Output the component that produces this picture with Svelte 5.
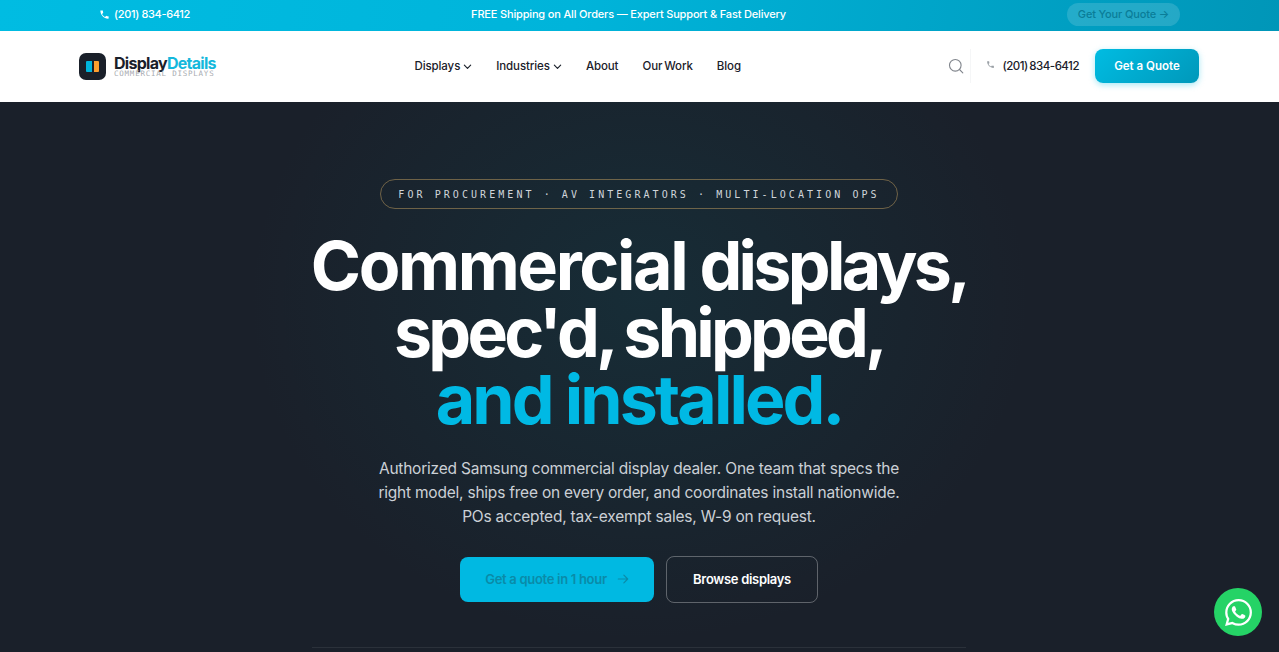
<script>
  const nav = [
    { label: 'Displays', caret: true },
    { label: 'Industries', caret: true },
    { label: 'About', caret: false },
    { label: 'Our Work', caret: false },
    { label: 'Blog', caret: false }
  ];
</script>

<div class="page">
  <div class="topbar">
    <a class="top-phone" href="#top">
      <svg viewBox="0 0 24 24" width="11" height="11"><path d="M6.6 10.8c1.4 2.8 3.8 5.100 6.600 6.600l2.200-2.200c.3-.3.7-.4 1-.2 1.100.4 2.300.6 3.600.6.600 0 1 .4 1 1V20c0 .6-.4 1-1 1C10.600 21 3 13.400 3 4c0-.6.4-1 1-1h3.500c.6 0 1 .4 1 1 0 1.300.2 2.500.6 3.600.1.300 0 .7-.2 1z" fill="#fff"/></svg>
      <span>(201) 834-6412</span>
    </a>
    <p class="top-msg">FREE Shipping on All Orders — Expert Support &amp; Fast Delivery</p>
    <a class="top-pill" href="#top">Get Your Quote →</a>
  </div>

  <header class="header">
    <a class="logo" href="#top">
      <span class="mark"><i class="blue"></i><i class="orange"></i></span>
      <span class="word">
        <span class="name">Display<em>Details</em></span>
        <span class="sub">COMMERCIAL DISPLAYS</span>
      </span>
    </a>
    <nav class="nav">
      {#each nav as item}
        <a href="#top">
          {item.label}
          {#if item.caret}
            <svg viewBox="0 0 10 10" width="9" height="9"><path d="M1.500 3.500 5 7l3.500-3.500" fill="none" stroke="#1a202a" stroke-width="1.300" stroke-linecap="round" stroke-linejoin="round"/></svg>
          {/if}
        </a>
      {/each}
    </nav>
    <div class="actions">
      <svg class="search" viewBox="0 0 16 16" width="16" height="16"><circle cx="7.300" cy="7.300" r="5.800" fill="none" stroke="#80858c" stroke-width="1.100"/><path d="m11.500 11.500 3.300 3.300" stroke="#80858c" stroke-width="1.100" stroke-linecap="round"/></svg>
      <span class="sep"></span>
      <a class="head-phone" href="#top">
        <svg class="hp-icon" viewBox="0 0 24 24" width="9" height="9"><path d="M6.600 10.800c1.400 2.800 3.800 5.100 6.600 6.600l2.200-2.200c.3-.3.7-.4 1-.2 1.100.4 2.300.6 3.600.6.600 0 1 .4 1 1V20c0 .6-.4 1-1 1C10.600 21 3 13.400 3 4c0-.6.4-1 1-1h3.500c.6 0 1 .4 1 1 0 1.300.2 2.500.6 3.600.1.300 0 .7-.2 1z" fill="#9aa0a6"/></svg>
        <span>(201) 834-6412</span>
      </a>
      <a class="cta" href="#top">Get a Quote</a>
    </div>
  </header>

  <section class="hero">
    <div class="kicker">FOR PROCUREMENT · AV INTEGRATORS · MULTI-LOCATION OPS</div>
    <h1><span class="line l1"><b class="w1">Commercial</b> <b class="w2">displays,</b></span><span class="line l2">spec'd, shipped,</span><span class="line l3">and installed.</span></h1>
    <p class="lead">Authorized Samsung commercial display dealer. One team that specs the right model, ships free on every order, and coordinates install nationwide. POs accepted, tax-exempt sales, W-9 on request.</p>
    <div class="buttons">
      <a class="primary" href="#top">
        Get a quote in 1 hour
        <svg viewBox="0 0 14 14" width="12" height="12"><path d="M1.500 7h11M8 2.500 12.500 7 8 11.500" fill="none" stroke="#0a8ba8" stroke-width="1.400" stroke-linecap="round" stroke-linejoin="round"/></svg>
      </a>
      <a class="secondary" href="#top">Browse displays</a>
    </div>
    <div class="rule"></div>
  </section>

  <a class="whatsapp" href="#top" aria-label="WhatsApp">
    <svg viewBox="0 0 24 24" width="27" height="27"><path fill="#fff" d="M17.470 14.380c-.3-.15-1.760-.87-2.030-.97-.27-.1-.47-.15-.67.15-.2.3-.77.970-.94 1.170-.17.2-.35.220-.65.070-.3-.15-1.260-.46-2.400-1.480-.890-.79-1.490-1.770-1.660-2.070-.17-.3-.02-.46.130-.61.130-.13.300-.35.450-.520.150-.170.200-.3.300-.5.100-.2.050-.37-.02-.52-.08-.15-.67-1.620-.92-2.220-.24-.58-.49-.5-.67-.51h-.57c-.2 0-.52.070-.79.370-.27.300-1.040 1.020-1.040 2.480s1.070 2.880 1.220 3.080c.15.200 2.100 3.200 5.080 4.490.71.310 1.260.490 1.690.630.710.220 1.360.190 1.870.120.570-.09 1.760-.72 2.010-1.420.250-.7.250-1.290.170-1.420-.070-.130-.27-.2-.57-.35zM12.050 21.790h-.010a9.870 9.870 0 0 1-5.030-1.380l-.36-.21-3.740.98 1-3.650-.23-.37a9.860 9.860 0 0 1-1.510-5.260c0-5.450 4.440-9.880 9.890-9.880a9.820 9.820 0 0 1 6.990 2.900 9.830 9.830 0 0 1 2.890 6.990c0 5.450-4.440 9.880-9.890 9.880zm8.410-18.300A11.820 11.820 0 0 0 12.050 0C5.490 0 .160 5.340.160 11.890c0 2.100.55 4.140 1.590 5.950L.060 24l6.310-1.650a11.880 11.880 0 0 0 5.680 1.450h.01c6.550 0 11.890-5.340 11.890-11.890a11.820 11.820 0 0 0-3.480-8.410z"/></svg>
  </a>
</div>

<style>
  :global(body) {
    margin: 0;
    background: #1a202a;
  }
  a {
    text-decoration: none;
    color: inherit;
  }
  .page {
    height: 652px;
    overflow: hidden;
    font-family: Inter, "Open Sans", sans-serif;
    color: #1a202a;
  }
  .topbar {
    height: 31px;
    box-sizing: border-box;
    padding: 0 99px 3px;
    display: flex;
    align-items: center;
    justify-content: space-between;
    background: linear-gradient(100deg, #00bce2 0%, #00b4da 45%, #0096b8 100%);
    color: #fff;
    font-size: 11px;
    font-weight: 500;
  }
  .top-phone {
    display: flex;
    align-items: center;
    gap: 4px;
    letter-spacing: -0.35px;
  }
  .top-msg {
    margin: 0;
    letter-spacing: -0.17px;
  }
  .top-pill {
    width: 113px;
    height: 23px;
    box-sizing: border-box;
    border-radius: 12px;
    background: rgba(255, 255, 255, 0.14);
    color: #0a7d98;
    display: flex;
    align-items: center;
    justify-content: center;
    letter-spacing: -0.15px;
  }
  .header {
    height: 71px;
    box-sizing: border-box;
    padding: 0 80px 1px 79px;
    display: flex;
    align-items: center;
    justify-content: space-between;
    background: #fff;
  }
  .logo {
    display: flex;
    align-items: center;
    gap: 8px;
    margin-top: 1px;
    width: 128px;
    white-space: nowrap;
  }
  .mark {
    width: 27px;
    height: 27px;
    flex: none;
    border-radius: 7px;
    background: #1a202a;
    display: flex;
    align-items: center;
    justify-content: center;
    gap: 2px;
  }
  .mark i {
    width: 5.500px;
    height: 11px;
  }
  .mark .blue {
    background: #00b4dc;
    border-radius: 1px 0 0 1px;
  }
  .mark .orange {
    background: #ff9f2e;
    border-radius: 0 1px 1px 0;
  }
  .word {
    display: flex;
    flex-direction: column;
    margin-top: -2px;
  }
  .name {
    font-size: 16px;
    line-height: 16px;
    font-weight: 700;
    letter-spacing: -0.72px;
  }
  .name em {
    font-style: normal;
    color: #14b8dc;
  }
  .sub {
    font-family: "DejaVu Sans Mono", monospace;
    font-size: 7.500px;
    line-height: 6px;
    letter-spacing: 0.77px;
    color: #a8acb1;
  }
  .nav {
    display: flex;
    align-items: center;
    gap: 24px;
    font-size: 11.500px;
    font-weight: 500;
    letter-spacing: -0.1px;
    word-spacing: -1px;
  }
  .nav a {
    display: flex;
    align-items: center;
    gap: 3px;
  }
  .actions {
    display: flex;
    align-items: center;
  }
  .search {
    margin-right: 6px;
  }
  .sep {
    width: 1px;
    height: 34px;
    background: #f5f6f7;
    margin-right: 15px;
  }
  .head-phone {
    display: flex;
    align-items: center;
    gap: 7px;
    font-size: 11.500px;
    font-weight: 500;
    letter-spacing: -0.5px;
    word-spacing: -1px;
    margin-right: 16px;
  }
  .hp-icon {
    margin-top: -3px;
  }
  .cta {
    width: 104px;
    height: 34px;
    border-radius: 8px;
    background: linear-gradient(135deg, #00bce2, #0098ba);
    color: #fff;
    font-size: 11.500px;
    font-weight: 600;
    display: flex;
    align-items: center;
    justify-content: center;
    box-shadow: 0 2px 6px rgba(0, 188, 226, 0.35);
  }
  .hero {
    height: 550px;
    box-sizing: border-box;
    padding: 77px 1px 0 0;
    display: flex;
    flex-direction: column;
    align-items: center;
    background:
      radial-gradient(ellipse 390px 340px at 50% 36%, rgba(12, 90, 100, 0.22), rgba(12, 90, 100, 0) 100%),
      #1a202a;
    color: #fff;
  }
  .kicker {
    width: 518px;
    height: 30px;
    box-sizing: border-box;
    border: 1px solid rgba(196, 160, 96, 0.5);
    border-radius: 15px;
    display: flex;
    align-items: center;
    justify-content: center;
    font-family: "DejaVu Sans Mono", monospace;
    font-size: 10px;
    letter-spacing: 3.060px;
    white-space: nowrap;
    color: #d0d5da;
  }
  h1 {
    margin: 23px 0 0;
    font-size: 68px;
    line-height: 67px;
    font-weight: 700;
    text-align: center;
    white-space: nowrap;
  }
  .line {
    display: block;
    height: 67px;
  }
  .l1 {
    word-spacing: -3px;
  }
  .w1 {
    font-weight: 700;
    letter-spacing: -2.350px;
  }
  .w2 {
    font-weight: 700;
    letter-spacing: -3.650px;
  }
  .l2 {
    letter-spacing: -3.750px;
    word-spacing: -2px;
  }
  .l3 {
    letter-spacing: -2.900px;
    color: #00b9e4;
  }
  .lead {
    margin: 24px 0 0;
    width: 540px;
    font-size: 15.500px;
    line-height: 24px;
    letter-spacing: -0.22px;
    text-align: center;
    color: #cbd0d6;
    font-weight: 400;
  }
  .buttons {
    margin-top: 27px;
    display: flex;
    align-items: center;
    gap: 12px;
  }
  .primary {
    width: 194px;
    height: 45px;
    box-sizing: border-box;
    padding-bottom: 1px;
    border-radius: 8px;
    background: #00b9e2;
    color: #0a8ba8;
    font-size: 13px;
    font-weight: 600;
    letter-spacing: -0.3px;
    display: flex;
    align-items: center;
    justify-content: center;
    gap: 10px;
  }
  .secondary {
    width: 152px;
    height: 47px;
    box-sizing: border-box;
    padding-bottom: 1px;
    border: 1px solid rgba(255, 255, 255, 0.3);
    border-radius: 8px;
    font-size: 13px;
    font-weight: 600;
    letter-spacing: -0.3px;
    display: flex;
    align-items: center;
    justify-content: center;
  }
  .rule {
    margin-top: 44px;
    width: 654px;
    height: 1px;
    flex: none;
    background: rgba(255, 255, 255, 0.08);
  }
  .whatsapp {
    position: fixed;
    right: 17px;
    bottom: 16px;
    width: 48px;
    height: 48px;
    border-radius: 50%;
    background: #25d366;
    display: flex;
    align-items: center;
    justify-content: center;
  }
</style>
